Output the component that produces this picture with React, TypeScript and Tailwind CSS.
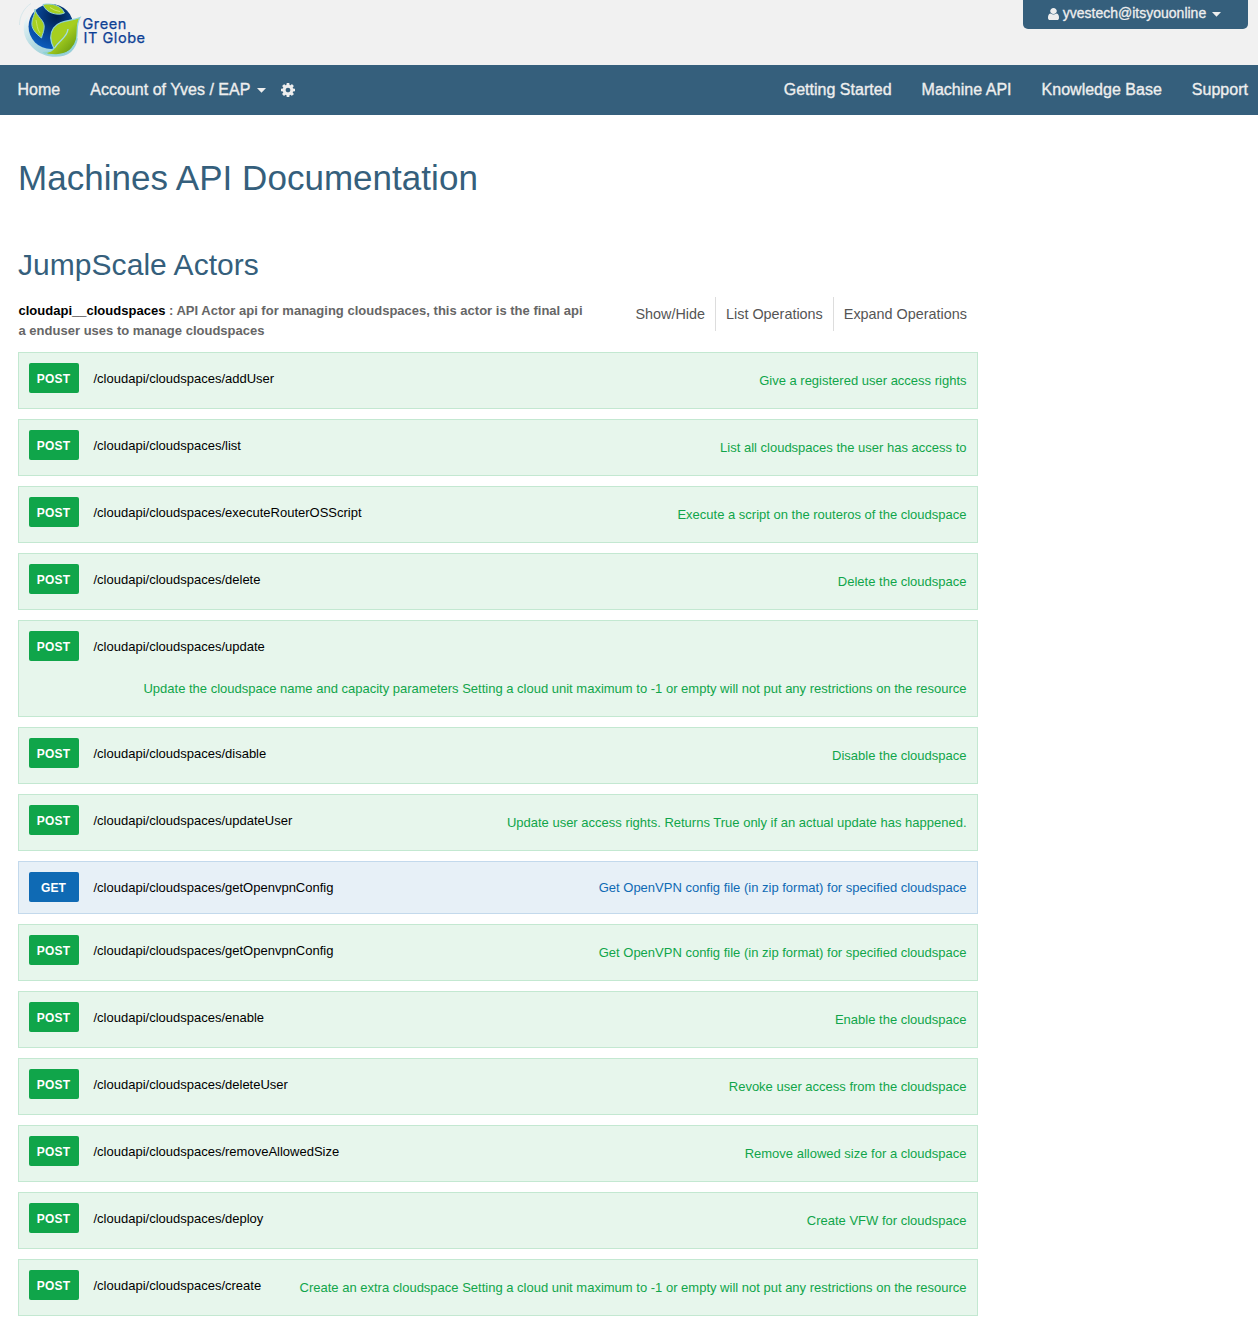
type Operation = {
  method: "POST" | "GET";
  name: string;
  summary: string;
  stacked?: boolean;
};

const operations: Operation[] = [
  { method: "POST", name: "addUser", summary: "Give a registered user access rights" },
  { method: "POST", name: "list", summary: "List all cloudspaces the user has access to" },
  { method: "POST", name: "executeRouterOSScript", summary: "Execute a script on the routeros of the cloudspace" },
  { method: "POST", name: "delete", summary: "Delete the cloudspace" },
  {
    method: "POST",
    name: "update",
    summary:
      "Update the cloudspace name and capacity parameters Setting a cloud unit maximum to -1 or empty will not put any restrictions on the resource",
    stacked: true,
  },
  { method: "POST", name: "disable", summary: "Disable the cloudspace" },
  { method: "POST", name: "updateUser", summary: "Update user access rights. Returns True only if an actual update has happened." },
  { method: "GET", name: "getOpenvpnConfig", summary: "Get OpenVPN config file (in zip format) for specified cloudspace" },
  { method: "POST", name: "getOpenvpnConfig", summary: "Get OpenVPN config file (in zip format) for specified cloudspace" },
  { method: "POST", name: "enable", summary: "Enable the cloudspace" },
  { method: "POST", name: "deleteUser", summary: "Revoke user access from the cloudspace" },
  { method: "POST", name: "removeAllowedSize", summary: "Remove allowed size for a cloudspace" },
  { method: "POST", name: "deploy", summary: "Create VFW for cloudspace" },
  {
    method: "POST",
    name: "create",
    summary: "Create an extra cloudspace Setting a cloud unit maximum to -1 or empty will not put any restrictions on the resource",
  },
];

function Caret() {
  return (
    <svg viewBox="0 0 9 5" className="mt-px h-[5px] w-[9px]" fill="currentColor">
      <path d="M0 0H9L4.5 4.800Z" />
    </svg>
  );
}

function UserIcon() {
  return (
    <svg viewBox="256 128 1280 1536" className="mr-[4px] h-[12px] w-[11px]" preserveAspectRatio="none" fill="currentColor">
      <path d="M1536 1399q0 109-62.5 187t-150.5 78h-854q-88 0-150.5-78t-62.5-187q0-85 8.5-160.5t31.5-152 58.5-131 94-89 134.5-34.5q131 128 313 128t313-128q76 0 134.5 34.5t94 89 58.5 131 31.5 152 8.5 160.5zm-256-887q0 159-112.5 271.5t-271.5 112.5-271.5-112.5-112.5-271.5 112.5-271.5 271.5-112.5 271.5 112.5 112.5 271.5z" />
    </svg>
  );
}

function CogIcon() {
  return (
    <svg viewBox="128 128 1536 1536" className="ml-[15px] size-[14px]" fill="currentColor">
      <path d="M1152 896q0-106-75-181t-181-75-181 75-75 181 75 181 181 75 181-75 75-181zm512-109v222q0 12-8 23t-20 13l-185 28q-19 54-39 91 35 50 107 138 10 12 10 25t-9 23q-27 37-99 108t-94 71q-12 0-26-9l-138-108q-44 23-91 38-16 136-29 186-7 28-36 28h-222q-14 0-24.5-8.5t-11.5-21.5l-28-184q-49-16-90-37l-141 107q-10 9-25 9-14 0-25-11-126-114-165-168-7-10-7-23 0-12 8-23 15-21 51-66.5t54-70.5q-27-50-41-99l-183-27q-13-2-21-12.5t-8-23.5v-222q0-12 8-23t19-13l186-28q14-46 39-92-40-57-107-138-10-12-10-24 0-10 9-23 26-36 98.5-107.5t94.5-71.5q13 0 26 10l138 107q44-23 91-38 16-136 29-186 7-28 36-28h222q14 0 24.5 8.5t11.5 21.5l28 184q49 16 90 37l142-107q9-9 24-9 13 0 25 10 129 119 165 170 7 8 7 22 0 12-8 23-15 21-51 66.5t-54 70.5q26 50 41 98l183 28q13 2 21 12.5t8 23.5z" />
    </svg>
  );
}

function Globe() {
  return (
    <svg viewBox="0 0 70 60" className="h-[60px] w-[70px] shrink-0">
      <defs>
        <radialGradient id="sea" cx="0.62" cy="0.28" r="0.75">
          <stop offset="0" stopColor="#00204f" />
          <stop offset="0.45" stopColor="#063c85" />
          <stop offset="1" stopColor="#0b5cbc" />
        </radialGradient>
        <linearGradient id="leaf" x1="0" y1="0" x2="1" y2="1">
          <stop offset="0.5" stopColor="#a6cf20" />
          <stop offset="0.95" stopColor="#5c8f0c" />
        </linearGradient>
        <linearGradient id="swirl" x1="0" y1="0" x2="1" y2="1">
          <stop offset="0" stopColor="#f4fafb" />
          <stop offset="0.45" stopColor="#b3dae1" />
          <stop offset="1" stopColor="#8fcbd6" />
        </linearGradient>
      </defs>
      <path d="M14 13 C6 23 7 38 17 47 C27 58 46 60 56 52 C60 48 62 44 63 38 L48 48 C30 51 15 42 13 27 C12 21 12 17 14 13Z" fill="url(#swirl)" />
      <path d="M4.5 25 C4.5 16 9 8 16 3.5" fill="none" stroke="#cfe3e8" strokeWidth="0.8" />
      <circle cx="36" cy="26.5" r="22.5" fill="url(#sea)" />
      <path d="M28 4.5 C36 3 46 5 49.5 13 C43 16 31 13.500 28 4.500Z" fill="#a6cf20" stroke="#8fd0d8" strokeWidth="1" />
      <path d="M35 7.500 Q40 11 45 11.500" fill="none" stroke="#d4eb80" strokeWidth="0.8" />
      <path d="M20 9 C21 17 31 20 29 29 C28.500 33 27 35 26.500 38 C20 33 16 28 17 22 C17 18 20 15 20 9Z" fill="#a6cf20" stroke="#8fd0d8" strokeWidth="1" />
      <path d="M21 20 C22 24 22 29 25 33" fill="none" stroke="#d4eb80" strokeWidth="0.8" />
      <path
        d="M65 17.500 C57 21 44 20 38.500 28 C34.500 34 35 41 39 48.500 L36 51 C33 52.500 30 52.500 28 52.500 C36 56 51 56 57 48 C66 38 59 28 65 17.500Z"
        fill="url(#leaf)"
        stroke="#8fd4dc"
        strokeWidth="1.200"
      />
      <path d="M53 29 C52 38 45 39 39.500 48" fill="none" stroke="#a3dce0" strokeWidth="1.400" />
    </svg>
  );
}

function OperationRow({ method, name, summary, stacked }: Operation) {
  const get = method === "GET";
  return (
    <li
      className={`flex justify-between border px-[10px] pt-[10px] ${stacked ? "h-[97px] flex-col" : get ? "h-[53px]" : "h-[57px]"} ${
        get ? "border-[#c3d9ec] bg-[#e7f0f7]" : "border-[#c3e8d1] bg-[#e7f6ec]"
      }`}
    >
      <div className="flex h-[30px] shrink-0 items-center">
        <span
          className={`flex h-[30px] w-[50px] items-center justify-center rounded-[2px] pt-px pr-px text-[12px] font-bold tracking-[0.15px] text-white ${
            get ? "bg-[#0f6ab4]" : "bg-[#10a54a]"
          }`}
        >
          {method}
        </span>
        <span className="ml-[14.5px] pt-[2px] text-[13px] text-black">/cloudapi/cloudspaces/{name}</span>
      </div>
      <p
        className={`pr-[0.5px] text-right text-[13px] leading-[20px] whitespace-nowrap ${
          get ? "pt-[6px] text-[#0f6ab4]" : stacked ? "pb-[17px] text-[#10a54a]" : "pt-[8px] text-[#10a54a]"
        }`}
      >
        {summary}
      </p>
    </li>
  );
}

export default function App() {
  return (
    <div className="h-[1321px] overflow-hidden bg-white font-['Liberation_Sans',Arial,sans-serif]">
      <header className="flex h-[65px] items-start justify-between bg-[#f1f1f1] pr-[10px] pl-[15px]">
        <div className="flex">
          <Globe />
          <div className="-ml-[2.5px] pt-[17px] font-['Inter',sans-serif] text-[14.5px] leading-[13.5px] tracking-[0.55px] text-[#0d3f94] [-webkit-text-stroke:0.25px]">
            <div>Green</div>
            <div className="pl-[1px]">IT Globe</div>
          </div>
        </div>
        <div className="flex h-[29px] w-[225px] items-center justify-center rounded-b-[5px] bg-[#355f7c] pr-[2px] pb-[2px] text-[14px] text-[#eeeeee] [-webkit-text-stroke:0.3px]">
          <UserIcon />
          <span className="mr-[6px]">yvestech@itsyouonline</span>
          <Caret />
        </div>
      </header>
      <nav className="flex h-[50px] items-center justify-between bg-[#355f7c] pr-[10px] pl-[17.5px] text-[16px] tracking-[0.015px] text-[#eeeeee] [-webkit-text-stroke:0.35px]">
        <div className="flex items-center">
          <span>Home</span>
          <span className="mr-[7px] ml-[30px]">Account of Yves / EAP</span>
          <Caret />
          <CogIcon />
        </div>
        <div className="flex gap-[30px]">
          <span>Getting Started</span>
          <span>Machine API</span>
          <span>Knowledge Base</span>
          <span>Support</span>
        </div>
      </nav>
      <main className="w-[978px] pl-[18px]">
        <h1 className="pt-[43px] text-[35px] leading-[40px] tracking-[0.03px] text-[#355f7c]">Machines API Documentation</h1>
        <h2 className="pt-[47px] text-[30px] leading-[40px] tracking-[0.05px] text-[#355f7c]">JumpScale Actors</h2>
        <div className="flex h-[67px] justify-between pt-[12px]">
          <h3 className="pt-[4px] pl-[0.5px] text-[13px] leading-[20px] font-bold tracking-[0.01px] text-[#666666]">
            <span className="text-black">cloudapi__cloudspaces</span> : API Actor api for managing cloudspaces, this actor is the final api
            <br />a enduser uses to manage cloudspaces
          </h3>
          <ul className="flex h-[34px] text-[14.4px] leading-[34px] text-[#555555]">
            <li className="border-r border-[#dddddd] px-[10px]">Show/Hide</li>
            <li className="border-r border-[#dddddd] px-[10px]">List Operations</li>
            <li className="pr-[11px] pl-[10px]">Expand Operations</li>
          </ul>
        </div>
        <ul className="flex flex-col gap-[10px]">
          {operations.map((operation) => (
            <OperationRow key={operation.method + operation.name} {...operation} />
          ))}
        </ul>
      </main>
    </div>
  );
}
